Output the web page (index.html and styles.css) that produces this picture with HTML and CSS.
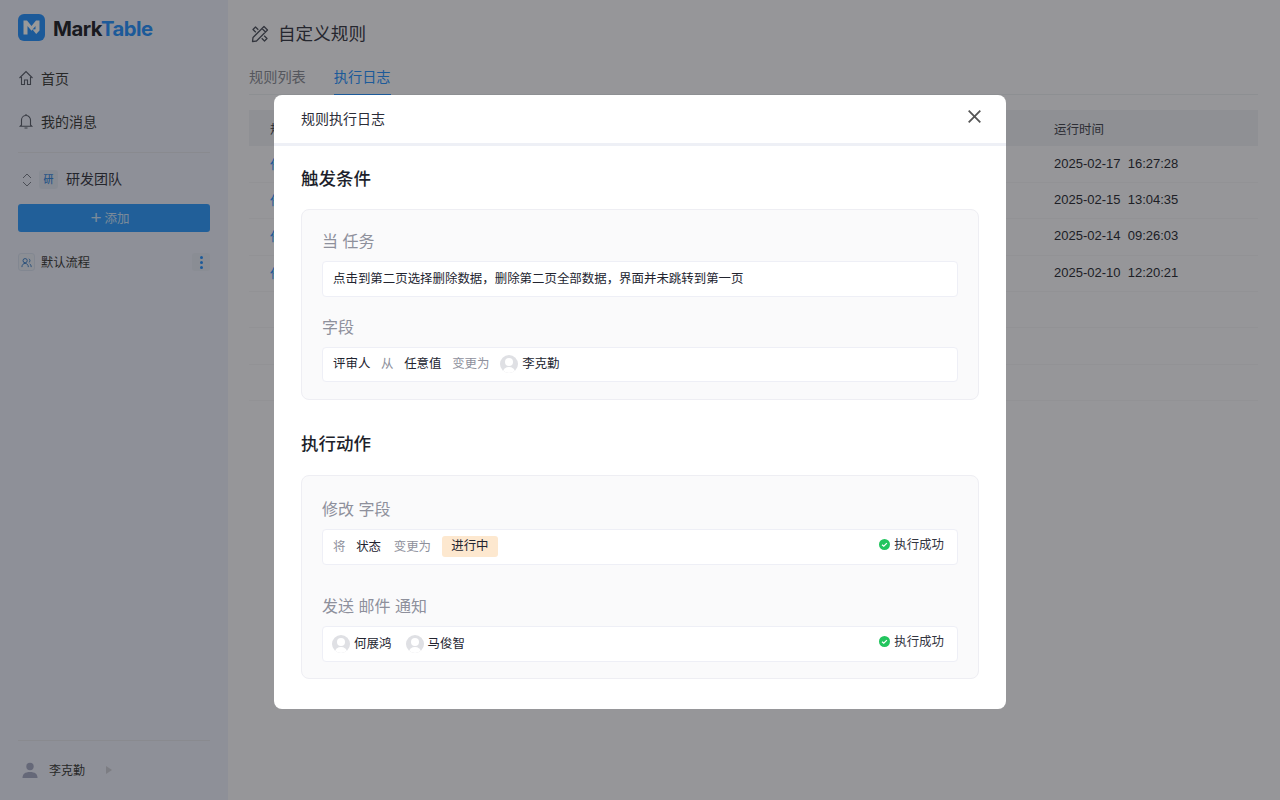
FILE: index.html
```html
<!DOCTYPE html>
<html>
<head>
  <title>MarkTable</title>
  <link rel="stylesheet" href="styles.css">
</head>
<body>
  <div class="sidebar">
    <div class="logo">
      <svg width="27" height="27" viewBox="0 0 27 27"><rect width="27" height="27" rx="6" fill="#3096ff"/><path d="M5.5 20.5V6.500H9L13.500 12 18 6.500h3.500v10l-3.300 3.500-3.700-4.500 3-.3V12L13.500 16.800 9.500 12v8.500z" fill="#fff"/></svg>
      <span class="logo-text">Mark<span class="logo-blue">Table</span></span>
    </div>
    <div class="nav-item">
      <svg width="16" height="16" viewBox="0 0 16 16" fill="none" stroke="#5f6472" stroke-width="1.100"><path d="M1.500 8L8 1.500 14.500 8M3.500 7v7.500h3V10h3v4.500h3V7"/></svg>
      <span>首页</span>
    </div>
    <div class="nav-item">
      <svg width="16" height="16" viewBox="0 0 16 16" fill="none" stroke="#5f6472" stroke-width="1.100"><path d="M3.500 12V7a4.500 4.500 0 0 1 9 0v5l1.200 1.200H2.300zM6.500 15h3M8 1v1.500"/></svg>
      <span>我的消息</span>
    </div>
    <div class="side-line"></div>
    <div class="team">
      <svg width="10" height="14" viewBox="0 0 10 14" fill="none" stroke="#7d8290" stroke-width="1"><path d="M1 5l4-4 4 4M1 9l4 4 4-4"/></svg>
      <span class="team-badge">研</span>
      <span class="team-name">研发团队</span>
    </div>
    <div class="add-btn"><span class="add-plus">+</span><span>添加</span></div>
    <div class="flow">
      <span class="flow-icon">
        <svg width="11" height="11" viewBox="0 0 12 12" fill="none" stroke="#3a7fc8" stroke-width="1"><circle cx="4.500" cy="4" r="2.300"/><path d="M1 11c0-2.500 1.500-4 3.500-4s3.500 1.500 3.500 4M8.500 2a2.200 2.200 0 0 1 0 4M9.500 7.500c1 .6 1.600 1.800 1.600 3.500"/></svg>
      </span>
      <span class="flow-name">默认流程</span>
      <span class="flow-more"><i></i><i></i><i></i></span>
    </div>
    <div class="side-bottom">
      <div class="side-line"></div>
      <div class="me">
        <svg width="16" height="16" viewBox="0 0 16 16" fill="#a9adc9"><circle cx="8" cy="4.500" r="3.700"/><path d="M0.500 16c0-4 2.500-6 7.500-6s7.500 2 7.500 6z"/></svg>
        <span class="me-name">李克勤</span>
        <span class="me-arrow"></span>
      </div>
    </div>
  </div>

  <div class="main">
    <div class="page-title">
      <svg class="page-icon" width="20" height="20" viewBox="0 0 20 20" fill="none" stroke="#555a68" stroke-width="1.300" stroke-linejoin="round"><path d="M2.500 17.500l.5-4L14 2.500 17.500 6l-11 11zM12 4.500L15.500 8"/><path d="M8.300 5.800L5.500 3 3 5.500l2.800 2.800M11.700 14.200l2.800 2.800 2.500-2.500-2.800-2.800"/></svg>
      <span class="page-name">自定义规则</span>
    </div>
    <div class="tabs">
      <span class="tab">规则列表</span>
      <span class="tab active">执行日志</span>
    </div>
    <div class="table">
      <div class="tr th"><span class="col-name">规</span><span class="col-time">运行时间</span></div>
      <div class="tr"><span class="col-name link">任</span><span class="col-time">2025-02-17&nbsp; 16:27:28</span></div>
      <div class="tr"><span class="col-name link">任</span><span class="col-time">2025-02-15&nbsp; 13:04:35</span></div>
      <div class="tr"><span class="col-name link">任</span><span class="col-time">2025-02-14&nbsp; 09:26:03</span></div>
      <div class="tr"><span class="col-name link">任</span><span class="col-time">2025-02-10&nbsp; 12:20:21</span></div>
      <div class="tr"></div>
      <div class="tr"></div>
      <div class="tr"></div>
    </div>
  </div>

  <div class="overlay">
    <div class="modal">
      <div class="modal-head">
        <span>规则执行日志</span>
        <svg width="13" height="13" viewBox="0 0 13 13" stroke="#555" stroke-width="1.800"><path d="M.7.7l11.600 11.600M12.300.7L.7 12.300"/></svg>
      </div>
      <div class="modal-body">
        <h3>触发条件</h3>
        <div class="block block-trigger">
          <div class="label">当 任务</div>
          <div class="row">点击到第二页选择删除数据，删除第二页全部数据，界面并未跳转到第一页</div>
          <div class="label label-next">字段</div>
          <div class="row">
            <span>评审人</span><span class="muted">从</span><span>任意值</span><span class="muted">变更为</span>
            <span class="person"><span class="avatar"></span>李克勤</span>
          </div>
        </div>
        <h3 class="h3-next">执行动作</h3>
        <div class="block block-action">
          <div class="label">修改 字段</div>
          <div class="row">
            <span class="muted">将</span><span class="field">状态</span><span class="muted">变更为</span><span class="tag">进行中</span>
            <span class="ok"><svg width="11" height="11" viewBox="0 0 12 12"><circle cx="6" cy="6" r="6" fill="#22c55e"/><path d="M3.300 6.200l1.900 1.700 3.400-3.400" fill="none" stroke="#fff" stroke-width="1.300"/></svg>执行成功</span>
          </div>
          <div class="label label-far">发送 邮件 通知</div>
          <div class="row">
            <span class="person first"><span class="avatar"></span>何展鸿</span>
            <span class="person"><span class="avatar"></span>马俊智</span>
            <span class="ok"><svg width="11" height="11" viewBox="0 0 12 12"><circle cx="6" cy="6" r="6" fill="#22c55e"/><path d="M3.300 6.200l1.900 1.700 3.400-3.400" fill="none" stroke="#fff" stroke-width="1.300"/></svg>执行成功</span>
          </div>
        </div>
      </div>
    </div>
  </div>
</body>
</html>
```

FILE: styles.css
```css
* {
  box-sizing: border-box;
}
html, body {
  height: 100%;
}
body {
  margin: 0;
  display: flex;
  height: 800px;
  overflow: hidden;
  background: #fbfbff;
  color: #1d1f2b;
  font-family: "Liberation Sans", "Noto Sans CJK SC", sans-serif;
  font-size: 14px;
}

/* Sidebar */
.sidebar {
  width: 228px;
  flex: none;
  display: flex;
  flex-direction: column;
  padding: 14px 18px 0;
  background: #edf0fd;
}
.logo {
  display: flex;
  align-items: center;
  gap: 8px;
  height: 27px;
  margin-bottom: 15px;
}
.logo-text {
  margin-top: 2px;
  font-family: "Inter", sans-serif;
  font-size: 20.300px;
  font-weight: 700;
  letter-spacing: -0.5px;
  color: #2a2c35;
}
.logo-blue {
  color: #3096ff;
}
.nav-item {
  display: flex;
  align-items: center;
  gap: 7px;
  height: 43px;
  color: #444;
}
.side-line {
  height: 1px;
  background: #e5e7ef;
}
.nav-item + .side-line {
  margin-top: 10px;
}
.team {
  display: flex;
  align-items: center;
  height: 19px;
  margin-top: 17px;
  padding-left: 4px;
  color: #3d404c;
}
.team-badge {
  width: 19px;
  height: 19px;
  margin: 0 8px 0 7px;
  border-radius: 3px;
  background: #e2e8f6;
  color: #3a8be0;
  font-size: 10px;
  font-weight: 500;
  line-height: 20px;
  text-align: center;
}
.team-name {
  margin-top: -3px;
}
.add-btn {
  display: flex;
  align-items: center;
  justify-content: center;
  gap: 3px;
  height: 28px;
  margin-top: 15px;
  padding: 0 8px 2px 0;
  border-radius: 3px;
  background: #389fff;
  color: rgba(255, 255, 255, 0.75);
  font-size: 12.500px;
}
.add-plus {
  font-size: 19px;
  line-height: 1;
}
.flow {
  display: flex;
  align-items: center;
  height: 18px;
  margin-top: 21px;
}
.flow-icon {
  width: 17px;
  height: 18px;
  display: flex;
  align-items: center;
  justify-content: center;
  border: 1px solid #d9e2f2;
  border-radius: 3px;
  background: #eaeef9;
}
.flow-name {
  margin-left: 6px;
  font-size: 12.250px;
  color: #444;
}
.flow-more {
  width: 18px;
  height: 18px;
  margin-left: auto;
  display: flex;
  flex-direction: column;
  align-items: center;
  justify-content: center;
  gap: 2px;
  border-radius: 3px;
  background: #e6ebf7;
}
.flow-more i {
  width: 3px;
  height: 3px;
  border-radius: 50%;
  background: #3096ff;
}
.side-bottom {
  margin-top: auto;
  padding-bottom: 22px;
}
.me {
  display: flex;
  align-items: center;
  height: 16px;
  margin-top: 21px;
  padding-left: 4px;
}
.me-name {
  margin: -2px 0 0 11px;
  font-size: 12px;
  color: #444;
}
.me-arrow {
  margin-left: 21px;
  border-left: 6px solid #cfd1da;
  border-top: 4px solid transparent;
  border-bottom: 4px solid transparent;
}

/* Main */
.main {
  flex: 1;
  padding: 25px 22px 0 21px;
}
.page-title {
  display: flex;
  align-items: center;
  gap: 8px;
  height: 20px;
  margin-left: 1px;
  font-size: 17.600px;
  color: #3f424f;
}
.page-icon {
  margin-top: -2px;
}
.page-name {
  margin-top: -5px;
}
.tabs {
  display: flex;
  gap: 28px;
  height: 50px;
  padding-top: 22px;
  border-bottom: 1px solid #eceef4;
}
.tab {
  height: 29px;
  color: #8e919c;
  font-size: 14.200px;
  line-height: 21px;
}
.tab.active {
  color: #3096ff;
  border-bottom: 2px solid #3096ff;
}
.table {
  margin-top: 15px;
}
.tr {
  display: flex;
  align-items: center;
  height: 36.400px;
  padding: 0 0 2px 21px;
  border-bottom: 1px solid #f3f4f8;
  font-size: 12.500px;
  color: #33353f;
}
.th {
  padding-bottom: 0;
  background: #eef0f7;
  border-bottom: none;
  color: #4b4d58;
}
.col-name {
  margin-right: auto;
}
.col-time {
  width: 204px;
  font-size: 13px;
}
.th .col-time {
  font-size: 12.500px;
}
.link {
  color: #3096ff;
}

/* Modal */
.overlay {
  position: fixed;
  top: 0;
  left: 0;
  right: 0;
  bottom: 0;
  display: flex;
  justify-content: center;
  align-items: flex-start;
  padding-top: 95px;
  background: rgba(0, 0, 0, 0.4);
}
.modal {
  width: 732px;
  height: 614px;
  border-radius: 8px;
  background: #fff;
}
.modal-head {
  display: flex;
  align-items: center;
  justify-content: space-between;
  height: 51px;
  padding: 0 25px 2px 27px;
  border-bottom: 3px solid #eef0f6;
  color: #2b2d38;
}
.modal-head svg {
  margin-top: -3px;
}
.modal-body {
  padding: 21px 27px 0;
}
h3 {
  margin: 0;
  height: 25px;
  font-size: 17.500px;
  font-weight: 500;
  line-height: 25px;
  color: #1d1f2b;
}
.h3-next {
  margin-top: 32.500px;
}
.block {
  margin-top: 17px;
  padding: 21px 20px 16.500px;
  border: 1px solid #eeeef3;
  border-radius: 8px;
  background: #fafafb;
}
.block-action {
  margin-top: 18px;
  padding-top: 23px;
}
.label {
  height: 22px;
  font-size: 16px;
  line-height: 22px;
  color: #8e909c;
}
.label-next {
  margin-top: 20px;
}
.label-far {
  margin-top: 31.500px;
}
.row {
  display: flex;
  align-items: center;
  gap: 10.700px;
  height: 35.500px;
  margin-top: 8px;
  padding: 0 13px 2px 10px;
  border: 1px solid #eeeff6;
  border-radius: 4px;
  background: #fff;
  font-size: 12.450px;
  color: #22242f;
}
.field {
  margin-right: 2px;
}
.muted {
  color: #8e909c;
}
.person {
  display: flex;
  align-items: center;
  gap: 4px;
}
.person.first {
  margin-left: -1px;
}
.person + .person {
  margin-left: 3.500px;
}
.avatar {
  position: relative;
  width: 18px;
  height: 18px;
  margin-top: 2px;
  overflow: hidden;
  border-radius: 50%;
  background: #dfe0e4;
}
.avatar::before {
  content: "";
  position: absolute;
  top: 3px;
  left: 5px;
  width: 8px;
  height: 8px;
  border-radius: 50%;
  background: #fff;
}
.avatar::after {
  content: "";
  position: absolute;
  top: 12px;
  left: 3px;
  width: 12px;
  height: 10px;
  border-radius: 50%;
  background: #fff;
}
.tag {
  height: 21px;
  margin-top: 2px;
  padding: 0 9.500px;
  border-radius: 3px;
  background: #fde8cf;
  line-height: 21px;
}
.ok {
  display: flex;
  align-items: center;
  gap: 4px;
  margin-left: auto;
  margin-top: -3px;
  color: #33353f;
}
```
